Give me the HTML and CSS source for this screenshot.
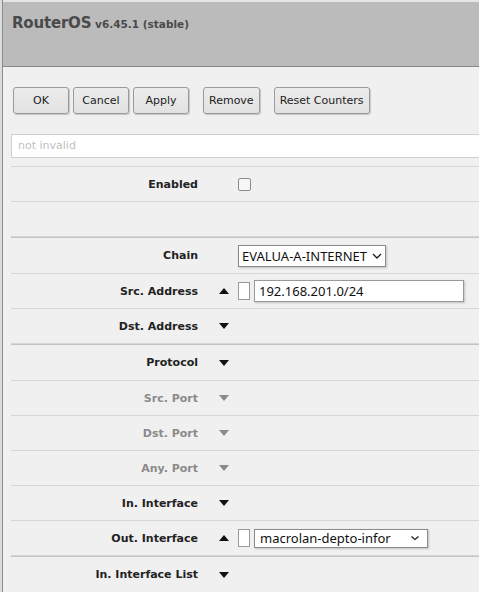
FILE: index.html
```html
<!DOCTYPE html>
<html>
<head>
<meta charset="utf-8">
<link rel="stylesheet" href="styles.css">
</head>
<body>
<div class="page">
  <div class="strip"></div>
  <div class="main">
    <header class="header">
      <span class="brand">RouterOS</span> <span class="version">v6.45.1 (stable)</span>
    </header>
    <div class="toolbar">
      <div class="group">
        <button class="btn">OK</button>
        <button class="btn">Cancel</button>
        <button class="btn">Apply</button>
      </div>
      <button class="btn">Remove</button>
      <button class="btn">Reset Counters</button>
    </div>
    <div class="filter">not invalid</div>
    <div class="form">
      <div class="row">
        <div class="label">Enabled</div>
        <div class="arrow-cell"></div>
        <div class="value"><span class="check"></span></div>
      </div>
      <div class="row"></div>
      <div class="row group-start">
        <div class="label">Chain</div>
        <div class="arrow-cell"></div>
        <div class="value">
          <div class="select chain">EVALUA-A-INTERNET<svg class="chev" width="10" height="6" viewBox="0 0 10 6"><path d="M1 1l4 4 4-4" fill="none" stroke="#222" stroke-width="1.4"/></svg></div>
        </div>
      </div>
      <div class="row">
        <div class="label">Src. Address</div>
        <div class="arrow-cell"><span class="tri up"></span></div>
        <div class="value"><span class="not"></span><div class="input src">192.168.201.0/24</div></div>
      </div>
      <div class="row">
        <div class="label">Dst. Address</div>
        <div class="arrow-cell"><span class="tri down"></span></div>
        <div class="value"></div>
      </div>
      <div class="row group-start">
        <div class="label">Protocol</div>
        <div class="arrow-cell"><span class="tri down"></span></div>
        <div class="value"></div>
      </div>
      <div class="row disabled">
        <div class="label">Src. Port</div>
        <div class="arrow-cell"><span class="tri down"></span></div>
        <div class="value"></div>
      </div>
      <div class="row disabled">
        <div class="label">Dst. Port</div>
        <div class="arrow-cell"><span class="tri down"></span></div>
        <div class="value"></div>
      </div>
      <div class="row disabled">
        <div class="label">Any. Port</div>
        <div class="arrow-cell"><span class="tri down"></span></div>
        <div class="value"></div>
      </div>
      <div class="row">
        <div class="label">In. Interface</div>
        <div class="arrow-cell"><span class="tri down"></span></div>
        <div class="value"></div>
      </div>
      <div class="row">
        <div class="label">Out. Interface</div>
        <div class="arrow-cell"><span class="tri up"></span></div>
        <div class="value"><span class="not"></span><div class="select out">macrolan-depto-infor<svg class="chev" width="10" height="6" viewBox="0 0 10 6"><path d="M1.5 1.5l3.5 3 3.5-3" fill="none" stroke="#222" stroke-width="1.3"/></svg></div></div>
      </div>
      <div class="row group-start">
        <div class="label">In. Interface List</div>
        <div class="arrow-cell"><span class="tri down"></span></div>
        <div class="value"></div>
      </div>
    </div>
  </div>
</div>
</body>
</html>
```
FILE: styles.css
```css
html, body {
  margin: 0;
  padding: 0;
  background: #f0f0f0;
  overflow: hidden;
}
body {
  font-family: "DejaVu Sans", Verdana, sans-serif;
  font-size: 11px;
  color: #222;
}
.page {
  display: flex;
  min-height: 592px;
  width: 479px;
  overflow: hidden;
}
.strip {
  width: 2px;
  background: #dcdcdc;
  border-right: 1px solid #8c8c8c;
  flex: none;
}
.main {
  flex: 1;
  min-width: 0;
  overflow: hidden;
}
.header {
  height: 64px;
  background: #bbbbbb;
  border-top: 2px solid #e6e5e2;
  border-bottom: 1px solid #888;
  box-sizing: content-box;
  padding-left: 9px;
  color: #4a4a4a;
  font-weight: bold;
}
.brand {
  display: inline-block;
  font-size: 15px;
  line-height: 18px;
  margin-top: 12px;
  letter-spacing: -0.2px;
}
.version {
  font-size: 10.5px;
}
.toolbar {
  display: flex;
  gap: 14px;
  padding: 20px 0 0 10px;
  height: 26px;
}
.group {
  display: flex;
  gap: 4px;
}
.btn {
  font-family: "DejaVu Sans", Verdana, sans-serif;
  font-size: 11px;
  color: #222;
  height: 27px;
  min-width: 56px;
  padding: 0 5px;
  margin: 0;
  background: linear-gradient(#ececec, #e2e2e2);
  border: 1px solid #9a9a9a;
  border-radius: 3px;
  box-shadow: 1px 1px 1px rgba(0,0,0,0.18);
}
.filter {
  margin: 21px 0 0 8px;
  height: 22px;
  line-height: 22px;
  border: 1px solid #d0d0d0;
  border-right: none;
  background: #fff;
  color: #c0c0c0;
  padding-left: 6px;
}
.form {
  margin: 8px 0 0 8px;
  border-top: 1px solid #d6d6d6;
}
.row {
  display: flex;
  align-items: center;
  height: 34px;
  border-bottom: 1px solid #d6d6d6;
}
.row.group-start {
  border-top: 1px solid #c4c4c4;
  height: 35px;
}
.label {
  width: 187px;
  text-align: right;
  font-weight: bold;
  color: #222;
  flex: none;
}
.row.disabled .label {
  color: #8a8a8a;
}
.arrow-cell {
  width: 40px;
  flex: none;
  padding-left: 21px;
  box-sizing: border-box;
  display: flex;
  align-items: center;
}
.tri {
  width: 0;
  height: 0;
  border-left: 5px solid transparent;
  border-right: 5px solid transparent;
}
.tri.down {
  border-top: 6px solid #111;
}
.tri.up {
  border-bottom: 6px solid #111;
}
.row.disabled .tri.down {
  border-top-color: #8a8a8a;
}
.value {
  display: flex;
  align-items: center;
  gap: 4px;
}
.check {
  width: 11px;
  height: 11px;
  border: 1.5px solid #8a8a93;
  border-radius: 2px;
  background: #f7f7f7;
}
.not {
  width: 10px;
  height: 16px;
  border: 1px solid #999;
  background: #fff;
}
.select, .input {
  font-family: "Noto Sans", sans-serif;
  font-size: 13px;
  color: #111;
  background: #fff;
  border: 1px solid #8a8a8a;
  box-shadow: 1px 1px 2px rgba(0,0,0,0.2);
  box-sizing: border-box;
  display: flex;
  align-items: center;
  justify-content: space-between;
}
.select.chain {
  width: 148px;
  height: 22px;
  padding: 0 3px 0 3px;
}
.input.src {
  width: 210px;
  height: 22px;
  padding-left: 4px;
  border-color: #999;
}
.select.out {
  width: 174px;
  height: 19px;
  padding: 0 7px 0 5px;
}
```
